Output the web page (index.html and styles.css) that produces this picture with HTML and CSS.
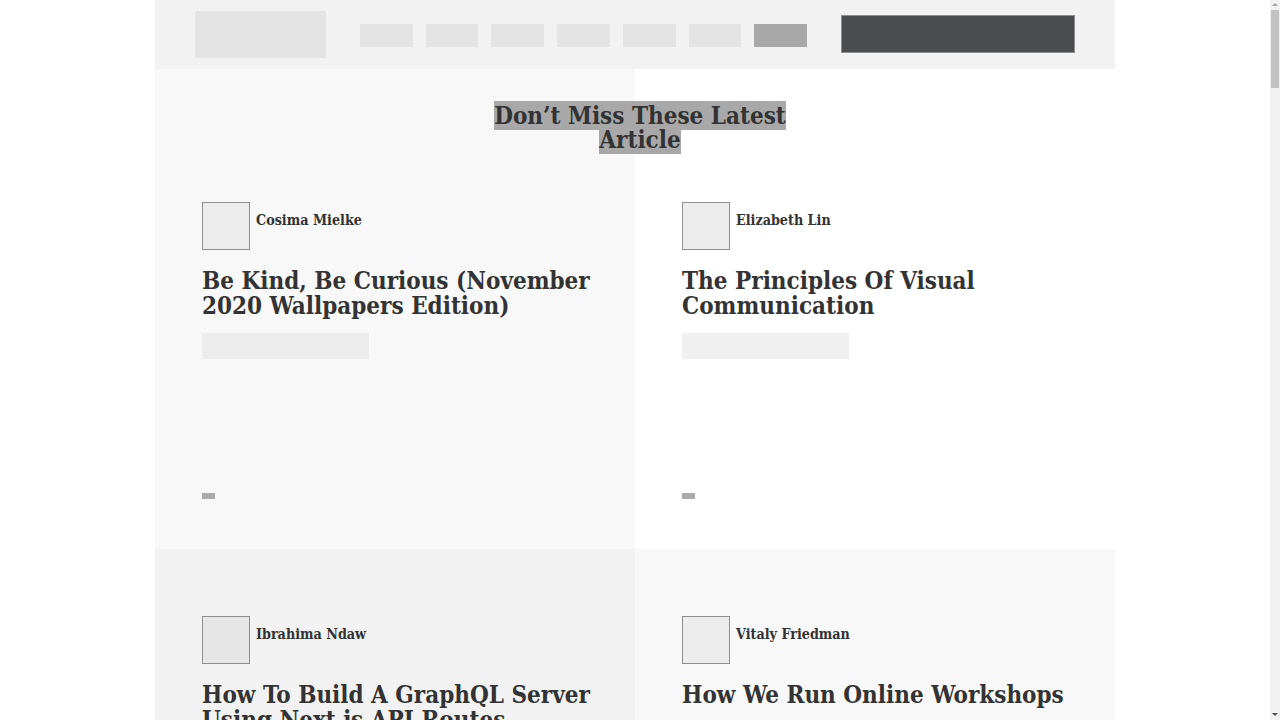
FILE: index.html
```html
<!DOCTYPE html>
<html lang="en">
<head>
<meta charset="utf-8">
<title>Latest Articles</title>
<link rel="stylesheet" href="styles.css">
</head>
<body>
<div class="page">
  <header class="header">
    <div class="logo"></div>
    <nav class="nav">
      <span class="nav-item"></span>
      <span class="nav-item"></span>
      <span class="nav-item"></span>
      <span class="nav-item"></span>
      <span class="nav-item"></span>
      <span class="nav-item"></span>
      <span class="nav-item nav-item--active"></span>
    </nav>
    <div class="cta"></div>
  </header>

  <section class="latest">
    <h2 class="latest-title"><span>Don’t Miss These Latest Article</span></h2>
    <div class="grid">
      <article class="card card--first card--light">
        <div class="author"><div class="avatar"></div><span class="author-name">Cosima Mielke</span></div>
        <h3 class="card-title">Be Kind, Be Curious (November 2020 Wallpapers Edition)</h3>
        <div class="excerpt"></div>
        <div class="tag"></div>
      </article>
      <article class="card card--first card--white">
        <div class="author"><div class="avatar"></div><span class="author-name">Elizabeth Lin</span></div>
        <h3 class="card-title">The Principles Of Visual Communication</h3>
        <div class="excerpt"></div>
        <div class="tag"></div>
      </article>
      <article class="card card--mid">
        <div class="author"><div class="avatar"></div><span class="author-name">Ibrahima Ndaw</span></div>
        <h3 class="card-title">How To Build A GraphQL Server Using Next.js API Routes</h3>
        <div class="excerpt"></div>
        <div class="tag"></div>
      </article>
      <article class="card card--light">
        <div class="author"><div class="avatar"></div><span class="author-name">Vitaly Friedman</span></div>
        <h3 class="card-title">How We Run Online Workshops</h3>
        <div class="excerpt"></div>
        <div class="tag"></div>
      </article>
    </div>
  </section>
</div>
<div class="scrollbar" aria-hidden="true">
  <span class="scroll-arrow scroll-arrow--up"></span>
  <span class="scroll-thumb"></span>
  <span class="scroll-arrow scroll-arrow--down"></span>
</div>
</body>
</html>
```
FILE: styles.css
```css
html, body {
  margin: 0;
  padding: 0;
  background: #ffffff;
}
body {
  font-family: "DejaVu Serif Condensed", "DejaVu Serif", serif;
  color: #333333;
  padding-right: 10px;
}
.page {
  width: 960px;
  margin: 0 auto;
}
.header {
  height: 69px;
  background: #f2f2f2;
  display: flex;
  align-items: center;
  padding: 0 40px;
  box-sizing: border-box;
}
.logo {
  width: 131px;
  height: 47px;
  background: #e4e4e4;
  margin-top: -1px;
}
.nav {
  display: flex;
  gap: 13px;
  width: 447px;
  margin-left: 34px;
  margin-top: 1px;
}
.nav-item {
  flex: 1;
  height: 23px;
  background: #e4e4e4;
}
.nav-item--active {
  background: #a8a8a8;
}
.cta {
  width: 232px;
  height: 36px;
  margin-left: auto;
  margin-top: -1px;
  background: #4b4c4e;
  border: 1px solid #8d8d8f;
}
.latest {
  position: relative;
}
.latest-title {
  position: absolute;
  top: 35px;
  left: 10px;
  right: 0;
  margin: 0 auto;
  max-width: 320px;
  text-align: center;
  font-size: 24px;
  line-height: 24px;
  font-weight: bold;
  color: #333333;
}
.latest-title span {
  background: #a8a8a8;
}
.grid {
  display: grid;
  grid-template-columns: 480px 480px;
}
.card {
  padding: 67px 40px 0 47px;
  min-height: 480px;
  box-sizing: border-box;
  display: flex;
  flex-direction: column;
  align-items: flex-start;
}
.card--first {
  padding-top: 133px;
}
.card--light { background: #f8f8f8; }
.card--white { background: #ffffff; }
.card--mid { background: #f2f2f2; }
.author {
  display: flex;
  align-items: flex-start;
  gap: 6px;
}
.avatar {
  width: 46px;
  height: 46px;
  background: #ececec;
  border: 1px solid #8f8f8f;
}
.card--mid .avatar { background: #e6e6e6; }
.author-name {
  font-size: 14.2px;
  font-weight: bold;
  line-height: 18px;
  margin-top: 9px;
}
.card-title {
  margin: 18px 0 0;
  font-size: 24px;
  line-height: 25px;
  font-weight: bold;
}
.excerpt {
  width: 167px;
  height: 26px;
  background: #ececec;
  margin-top: 15px;
}
.card--white .excerpt { background: #f0f0f0; }
.tag {
  width: 13px;
  height: 6px;
  background: #aaaaaa;
  margin-top: 134px;
}
.scrollbar {
  position: fixed;
  top: 0;
  right: 0;
  width: 10px;
  height: 100vh;
  background: #f1f1f1;
}
.scroll-thumb {
  position: absolute;
  top: 10px;
  left: 1px;
  width: 8px;
  height: 78px;
  background: #c1c1c1;
}
.scroll-arrow {
  position: absolute;
  left: 2px;
  width: 0;
  height: 0;
  border-left: 3px solid transparent;
  border-right: 3px solid transparent;
}
.scroll-arrow--up {
  top: 3px;
  border-bottom: 3px solid #a3a3a3;
}
.scroll-arrow--down {
  bottom: 4px;
  border-top: 3px solid #505050;
}
```
